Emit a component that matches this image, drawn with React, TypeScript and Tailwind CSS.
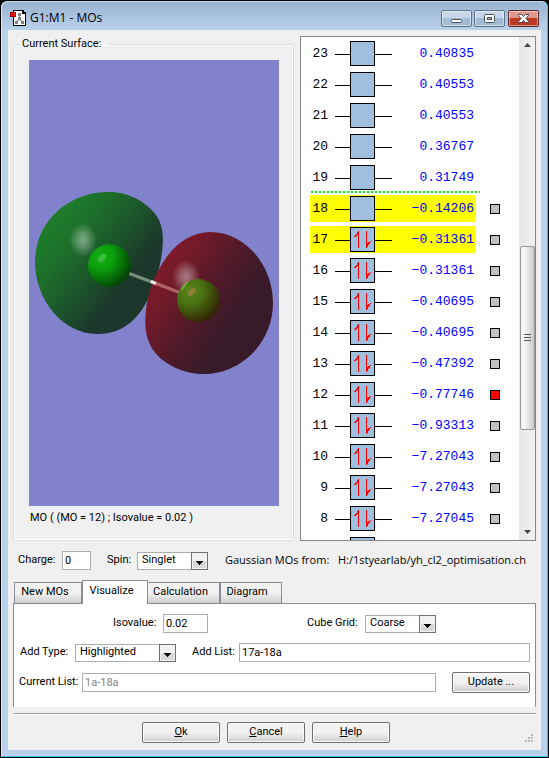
import { useState } from "react";
import type { ReactNode } from "react";

type Orbital = { id: number; energy: string; occupied: boolean; surface: boolean };

const ORBITALS: Orbital[] = [
  { id: 23, energy: "0.40835", occupied: false, surface: false },
  { id: 22, energy: "0.40553", occupied: false, surface: false },
  { id: 21, energy: "0.40553", occupied: false, surface: false },
  { id: 20, energy: "0.36767", occupied: false, surface: false },
  { id: 19, energy: "0.31749", occupied: false, surface: false },
  { id: 18, energy: "−0.14206", occupied: false, surface: true },
  { id: 17, energy: "−0.31361", occupied: true, surface: true },
  { id: 16, energy: "−0.31361", occupied: true, surface: true },
  { id: 15, energy: "−0.40695", occupied: true, surface: true },
  { id: 14, energy: "−0.40695", occupied: true, surface: true },
  { id: 13, energy: "−0.47392", occupied: true, surface: true },
  { id: 12, energy: "−0.77746", occupied: true, surface: true },
  { id: 11, energy: "−0.93313", occupied: true, surface: true },
  { id: 10, energy: "−7.27043", occupied: true, surface: true },
  { id: 9, energy: "−7.27043", occupied: true, surface: true },
  { id: 8, energy: "−7.27045", occupied: true, surface: true },
];

const HIGHLIGHTED = [18, 17];
const TABS = ["New MOs", "Visualize", "Calculation", "Diagram"];

const inputClass = "h-[19px] border border-[#abadb3] bg-white px-[2px] leading-4 outline-none";

export default function App() {
  const [tab, setTab] = useState("Visualize");
  const [current, setCurrent] = useState(12);

  return (
    <div className="bg-black p-px font-[Roboto,sans-serif] text-[11px] text-black">
      <div className="rounded-t-md border border-t-[#c9d9ea] border-r-[#35c5ee] border-b-[#35c5ee] border-l-[#dbe8f5] bg-[#b9d1ea] px-[6px] pb-[6px]">
        <TitleBar />
        <main className="bg-[#f0f0f0] px-[5px] pt-[6px]">
          <div className="flex gap-[6px]">
            <SurfaceView />
            <OrbitalList current={current} onSelect={setCurrent} />
          </div>

          {/* Charge / spin */}
          <div className="flex h-[39px] items-center pr-[6px] pl-[5px]">
            <label htmlFor="charge" className="w-[44px] shrink-0">Charge:</label>
            <input id="charge" defaultValue="0" className={`${inputClass} w-[29px] shrink-0`} />
            <label htmlFor="spin" className="ml-4 w-[30px] shrink-0">Spin:</label>
            <Combo id="spin" options={["Singlet", "Triplet"]} className="w-[71px]" />
            <span className="ml-[17px] w-[113px] shrink-0 font-['Open_Sans',sans-serif] whitespace-nowrap">Gaussian MOs from:</span>
            <span className="min-w-0 flex-1 overflow-hidden font-['Open_Sans',sans-serif] whitespace-nowrap">
              H:/1styearlab/yh_cl2_optimisation.ch
            </span>
          </div>

          {/* Tabs */}
          <div role="tablist" className="flex h-[24px] items-end pl-px">
            {TABS.map((name) => (
              <button
                key={name}
                role="tab"
                aria-selected={tab === name}
                onClick={() => setTab(name)}
                className={
                  tab === name
                    ? "-mr-px h-[24px] w-[66px] border border-b-0 border-[#898c95] bg-white pr-[7px] pb-[3px]"
                    : `h-[22px] border border-[#898c95] bg-linear-to-b from-[#f2f2f2] from-50% to-[#cfcfcf] pb-[2px] ${
                        name === "New MOs" ? "w-[68px] pr-[6px]" : name === "Calculation" ? "w-[73px] pr-[6px]" : "w-[62px] pr-[8px]"
                      }`
                }
              >
                {name}
              </button>
            ))}
          </div>

          {/* Visualize panel */}
          <section className="-mt-px border-x border-t border-[#898c95] bg-white px-[5px] pt-[10px] pb-[14px]">
            <div className="flex h-[19px] items-center">
              <label htmlFor="isovalue" className="ml-[94px] w-[50px]">Isovalue:</label>
              <input id="isovalue" defaultValue="0.02" className={`${inputClass} w-[45px]`} />
              <label htmlFor="grid" className="ml-auto w-[58px]">Cube Grid:</label>
              <Combo id="grid" options={["Coarse", "Medium", "Fine"]} className="mr-[94px] w-[71px]" />
            </div>
            <div className="mt-[10px] flex h-[19px] items-center">
              <label htmlFor="add-type" className="ml-px w-[55px] shrink-0">Add Type:</label>
              <Combo id="add-type" options={["Highlighted", "All", "Other"]} className="w-[101px]" />
              <label htmlFor="add-list" className="ml-4 w-[47px] shrink-0">Add List:</label>
              <input id="add-list" defaultValue="17a-18a" className={`${inputClass} min-w-0 flex-1`} />
            </div>
            <div className="mt-[10px] flex h-[21px] items-center">
              <label htmlFor="current-list" className="w-[63px] shrink-0">Current List:</label>
              <input
                id="current-list"
                readOnly
                value="1a-18a"
                className={`${inputClass} mr-4 min-w-0 flex-1 text-[#838383]`}
              />
              <PushButton>Update ...</PushButton>
            </div>
          </section>

          {/* Footer */}
          <footer className="relative mt-[6px] flex justify-center gap-[7px] border-t border-[#a0a0a0] pt-[8px] pr-[17px] pb-[7px] shadow-[inset_0_1px_0_#fff]">
            <PushButton><u>O</u>k</PushButton>
            <PushButton><u>C</u>ancel</PushButton>
            <PushButton><u>H</u>elp</PushButton>
            <svg viewBox="0 0 8 8" className="absolute right-[3px] bottom-[8px] h-2 w-2 fill-[#b8b8b8]">
              <path d="M6 0h2v2H6zM3 3h2v2H3zM6 3h2v2H6zM0 6h2v2H0zM3 6h2v2H3zM6 6h2v2H6z" />
            </svg>
          </footer>
        </main>
      </div>
    </div>
  );
}

function TitleBar() {
  return (
    <header className="-mx-[6px] flex h-[28px] items-start rounded-t-md bg-linear-to-b from-[#98b3d2] to-[#bad1ea] pr-[8px] pl-[8px]">
      <svg viewBox="0 0 16 16" className="mt-[8px] h-4 w-4" shapeRendering="crispEdges">
        <path d="M3.500.5h9l3 3v12h-12z" fill="#fff" stroke="#000" />
        <path d="M12 0h2v2h2v2h-4z" fill="#000" />
        <path d="M9.500 4v5M9.500 8l-3 5M9.500 8l3 5" stroke="#999" fill="none" />
        <path d="M8 3h3v3H8zM8 7h3v3H8zM5 11h3v3H5zM11 11h3v3h-3z" fill="#808080" />
        <path d="M.5 2.500h5v4h-5z" fill="#f00" stroke="#900" />
      </svg>
      <h1 className="mt-[8px] ml-1 font-['Open_Sans',sans-serif] text-[12px] leading-4">G1:M1 - MOs</h1>
      <div className="mt-[8px] ml-auto flex gap-[2px]">
        <CaptionButton label="Minimize" className="border-[#5f7389] bg-linear-to-b from-[#c6d7e9] from-50% to-[#a3bbd4] to-50%">
          <rect x="10.500" y="9.500" width="10" height="3" rx="1" fill="#fff" stroke="#4a525c" />
        </CaptionButton>
        <CaptionButton label="Maximize" className="border-[#5f7389] bg-linear-to-b from-[#c6d7e9] from-50% to-[#a3bbd4] to-50%">
          <rect x="10.500" y="4.500" width="10" height="8" rx="1" fill="#fff" stroke="#4a525c" />
          <rect x="13.500" y="7.500" width="4" height="2" fill="#a9c0d8" stroke="#4a525c" />
        </CaptionButton>
        <CaptionButton label="Close" className="ml-px border-[#5b2a2a] bg-linear-to-b from-[#dd9a8c] from-45% to-[#bb3a22] to-50%">
          <path d="M10.500 4.500h3l2 2 2-2h3v1L18 8.500l2.500 3v1h-3l-2-2-2 2h-3v-1l2.500-3-2.500-3z" fill="#fff" stroke="#55484c" />
        </CaptionButton>
      </div>
    </header>
  );
}

function CaptionButton({ label, className, children }: { label: string; className: string; children: ReactNode }) {
  return (
    <button aria-label={label} className={`h-[17px] w-[31px] rounded-xs border shadow-[inset_0_0_0_1px_#ffffff77] ${className}`}>
      <svg viewBox="0 0 31 17" className="-m-px h-[17px] w-[31px]">{children}</svg>
    </button>
  );
}

function SurfaceView() {
  return (
    <fieldset className="min-w-0 flex-1 rounded-xs border border-[#d5dfe5] pr-[14px] pb-[14px] pl-[15px] shadow-[inset_0_0_0_1px_#fff]">
      <legend className="-ml-[8px] w-[88px] pl-px leading-4">Current Surface:</legend>
      <svg viewBox="0 0 250 446" className="mt-2 block w-full bg-[#8181cc]">
        <defs>
          <linearGradient id="green-lobe" x1="0.1" y1="0.15" x2="0.8" y2="0.75">
            <stop offset="0" stopColor="#1e802c" />
            <stop offset="0.3" stopColor="#1d6f2b" />
            <stop offset="0.6" stopColor="#1c522b" />
            <stop offset="0.85" stopColor="#1c372b" />
          </linearGradient>
          <linearGradient id="red-lobe" x1="0.1" y1="0.2" x2="0.8" y2="0.7">
            <stop offset="0" stopColor="#801a29" />
            <stop offset="0.2" stopColor="#741a29" />
            <stop offset="0.5" stopColor="#551a2a" />
            <stop offset="0.85" stopColor="#381a29" />
          </linearGradient>
          <radialGradient id="shine">
            <stop offset="0" stopColor="#fff" stopOpacity="0.42" />
            <stop offset="0.4" stopColor="#fff" stopOpacity="0.28" />
            <stop offset="1" stopColor="#fff" stopOpacity="0" />
          </radialGradient>
          <radialGradient id="green-atom" cx="0.3" cy="0.3" r="0.75">
            <stop offset="0" stopColor="#13b013" />
            <stop offset="0.4" stopColor="#0b9d0d" />
            <stop offset="0.75" stopColor="#066908" />
            <stop offset="1" stopColor="#044306" />
          </radialGradient>
          <radialGradient id="red-atom" cx="0.3" cy="0.28" r="0.75">
            <stop offset="0" stopColor="#5b8418" />
            <stop offset="0.4" stopColor="#497212" />
            <stop offset="0.75" stopColor="#3d470a" />
            <stop offset="1" stopColor="#332706" />
          </radialGradient>
        </defs>
        <path
          d="M78 132C98 131 118 142 127 155C134 165 135 178 133 192C130 216 121 240 109 255C99 267 86 274 68 274C34 274 6 240 6 202C6 164 36 133 78 132Z"
          fill="url(#green-lobe)"
        />
        <path
          d="M181 172C216 172 244 205 244 243C244 281 214 314 174 314C154 314 134 304 124 290C117 279 115 267 117 250C119 230 127 212 137 198C148 182 164 172 181 172Z"
          fill="url(#red-lobe)"
        />
        <ellipse cx="54" cy="180" rx="14" ry="17" fill="url(#shine)" />
        <ellipse cx="157" cy="217" rx="14" ry="17" fill="url(#shine)" />
        <path d="M99 213L123 222" stroke="#7b8f78" strokeWidth="3" />
        <path d="M127 223.500L152 233" stroke="#b16467" strokeWidth="3" />
        <path d="M122 221.500L127 223.500" stroke="#eef0ee" strokeWidth="3.500" />
        <circle cx="80.500" cy="205.500" r="21.500" fill="url(#green-atom)" />
        <ellipse cx="73" cy="198" rx="5" ry="3" transform="rotate(-40 73 198)" fill="#7fd67f" opacity="0.4" />
        <circle cx="169.500" cy="240.500" r="21.500" fill="url(#red-atom)" />
        <ellipse cx="163" cy="232" rx="5" ry="3" transform="rotate(-40 163 232)" fill="#b58050" opacity="0.55" />
        <path d="M151 230Q154 223 160 221L154 230Z" fill="#8ccf60" opacity="0.5" />
      </svg>
      <p className="mt-1 ml-px leading-4 whitespace-nowrap">MO ( (MO = 12) ; Isovalue = 0.02 )</p>
    </fieldset>
  );
}

function OrbitalList({ current, onSelect }: { current: number; onSelect: (id: number) => void }) {
  return (
    <div className="flex w-[236px] shrink-0 border border-[#828790] bg-white">
      <ul className="flex-1 overflow-hidden pt-[3px] font-['Liberation_Mono',monospace] text-[13px] [contain:size]">
        {ORBITALS.map((mo) => (
          <li key={mo.id}>
            <div className="flex h-[27px] items-center pl-[9px]">
              <div className={`flex h-full w-[166px] items-center ${HIGHLIGHTED.includes(mo.id) ? "bg-[#ffff00]" : ""}`}>
                <span className="w-[18px] text-right">{mo.id}</span>
                <LevelBox occupied={mo.occupied} />
                <span className="flex-1 pr-[2px] text-right text-[#0000ff]">{mo.energy}</span>
              </div>
              {mo.surface && (
                <button
                  aria-label={`Show surface ${mo.id}`}
                  onClick={() => onSelect(mo.id)}
                  className={`ml-[14px] h-[10px] w-[10px] border border-black ${mo.id === current ? "bg-[#ff0000]" : "bg-[#c0c0c0]"}`}
                />
              )}
            </div>
            {/* HOMO/LUMO divider sits in the gap below 19 */}
            <div className="h-1 pl-[10px]">
              {mo.id === 19 && (
                <div className="h-[2px] w-[169px] bg-[repeating-linear-gradient(90deg,#00ff00_0_2px,transparent_2px_4px)]" />
              )}
            </div>
          </li>
        ))}
        {/* top edge of the next level, scrolled out of view */}
        <li className="pt-px pl-[27px]">
          <LevelBox occupied />
        </li>
      </ul>
      <Scrollbar />
    </div>
  );
}

function LevelBox({ occupied }: { occupied: boolean }) {
  return (
    <svg viewBox="0 0 57 25" className="ml-[7px] h-[25px] w-[57px]" shapeRendering="crispEdges">
      <path d="M0 13.500h57" stroke="#000" />
      <rect x="15.500" y="0.500" width="24" height="24" fill="#a0bfdf" stroke="#000" />
      {occupied && (
        <g fill="#f00">
          <path d="M23 4h1v17h-1zM22 5h1v3h-1zM21 7h1v2h-1zM20 8h1v2h-1zM19 9h1v1h-1z" />
          <path d="M31 4h1v17h-1zM32 16h1v4h-1zM33 15h1v3h-1zM34 15h1v2h-1zM35 14h1v1h-1z" />
        </g>
      )}
    </svg>
  );
}

function Scrollbar() {
  return (
    <div className="flex w-4 flex-col items-center bg-linear-to-r from-[#e6e6e6] to-[#f1f1f1]">
      <svg viewBox="0 0 16 16" className="h-4 w-4 shrink-0">
        <path d="M5 10l3.500-4L12 10z" fill="#444" />
      </svg>
      <div className="grow-[193]" />
      <div className="flex h-[184px] w-[15px] shrink-0 items-center justify-center rounded-xs border border-[#979797] bg-linear-to-r from-[#f5f5f5] from-30% to-[#c8c8cb]">
        <svg viewBox="0 0 7 8" className="h-2 w-[7px]" shapeRendering="crispEdges">
          <path d="M0 .5h7M0 3.500h7M0 6.500h7" stroke="#555" />
        </svg>
      </div>
      <div className="grow-[94]" />
      <svg viewBox="0 0 16 16" className="h-4 w-4 shrink-0">
        <path d="M5 6h7l-3.500 4z" fill="#444" />
      </svg>
    </div>
  );
}

function Combo({ id, options, className }: { id: string; options: string[]; className: string }) {
  return (
    <div className={`relative h-[18px] shrink-0 ${className}`}>
      <select id={id} className="block h-full w-full appearance-none border border-[#abadb3] bg-white pr-4 pb-[2px] pl-1 leading-[14px] outline-none">
        {options.map((o) => (
          <option key={o}>{o}</option>
        ))}
      </select>
      <svg viewBox="0 0 17 18" className="pointer-events-none absolute top-0 right-0 h-[18px] w-[17px]" shapeRendering="crispEdges">
        <rect x="0.500" y="0.500" width="16" height="17" fill="#f2f2f2" stroke="#707070" />
        <path d="M2 9h13v7H2z" fill="#d8d8d8" />
        <path d="M5 9h7v1H5zM6 10h5v1H6zM7 11h3v1H7zM8 12h1v1H8z" fill="#000" />
      </svg>
    </div>
  );
}

function PushButton({ children }: { children: ReactNode }) {
  return (
    <button className="h-[21px] w-[78px] shrink-0 rounded-xs border border-[#707070] bg-linear-to-b from-[#f2f2f2] from-50% to-[#cfcfcf] pb-px leading-4 shadow-[inset_0_0_0_1px_#fafafa]">
      {children}
    </button>
  );
}
